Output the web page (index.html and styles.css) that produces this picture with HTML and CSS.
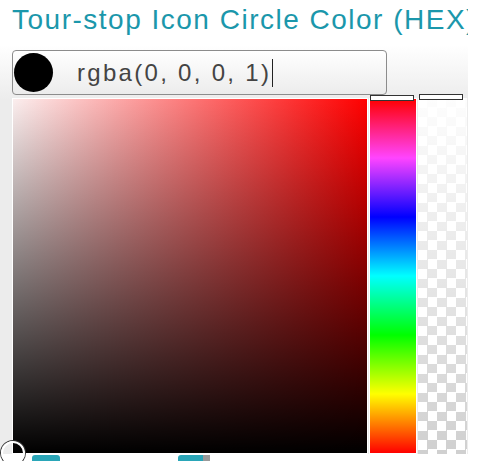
FILE: index.html
```html
<!DOCTYPE html>
<html lang="en">
<head>
    <meta charset="UTF-8">
    <title>Tour-stop Icon Circle Color</title>
    <link rel="stylesheet" href="styles.css">
</head>
<body>

<div class="field">
    <label class="field-label" for="circleColor">Tour-stop Icon Circle Color (HEX)</label>

    <div class="picker">
        <div class="color-input">
            <span class="swatch"></span>
            <span class="color-text" id="circleColor">rgba(0, 0, 0, 1)</span><span class="caret"></span>
        </div>

        <div class="picker-body">
            <div class="saturation">
                <span class="sat-cursor"></span>
            </div>
            <div class="hue">
                <span class="slider-handle"></span>
            </div>
            <div class="alpha">
                <span class="slider-handle"></span>
            </div>
        </div>

        <div class="picker-actions">
            <button class="btn btn-ok" aria-label="OK"></button>
            <button class="btn btn-clear" aria-label="Clear"></button>
            <span class="btn-edge"></span>
        </div>
    </div>
</div>

</body>
</html>
```

FILE: styles.css
```css
/* Color picker field */
body {
    margin: 0;
    background: #fff;
    font-family: 'Liberation Sans', Arial, sans-serif;
}

.field {
    width: 468px;
    overflow: hidden;
}

.field-label {
    display: block;
    padding: 4px 0 0 12px;
    height: 41px;
    font-size: 28px;
    letter-spacing: 1.5px;
    color: #1b97ab;
    white-space: nowrap;
}

.picker {
    position: relative;
    padding: 5px 0 0 0;
    background: linear-gradient(#fff, #ececec 55px, #ececec);
}

.color-input {
    display: flex;
    align-items: center;
    width: 373px;
    height: 43px;
    margin-left: 12px;
    border: 1px solid #8c8c8c;
    border-radius: 4px;
    background: linear-gradient(#fff, #ececec);
}

.swatch {
    width: 39px;
    height: 39px;
    margin-left: 1px;
    border-radius: 50%;
    background: #000;
}

.color-text {
    margin-left: 24px;
    font-size: 24px;
    letter-spacing: 2.3px;
    color: #444;
}

.caret {
    width: 1px;
    height: 28px;
    margin-left: 1px;
    background: #222;
}

.picker-body {
    display: flex;
    margin-top: 3px;
    padding-left: 12px;
}

.saturation {
    position: relative;
    width: 354px;
    height: 354px;
    border: 1px solid #fff;
    background:
        linear-gradient(to top, #000, rgba(0, 0, 0, 0)),
        linear-gradient(to right, #fbeeee, #f00);
}

.sat-cursor {
    position: absolute;
    left: -12px;
    bottom: -12px;
    width: 20px;
    height: 20px;
    border: 2px solid #fff;
    border-radius: 50%;
    box-shadow: 0 0 0 1px #333;
}

.hue {
    position: relative;
    width: 46px;
    height: 354px;
    margin-left: 1px;
    border: 1px solid #fff;
    background: linear-gradient(#f00, #f4f, #00f, #0ff, #0f0, #ff0, #f00);
}

.alpha {
    position: relative;
    width: 49px;
    height: 356px;
    margin-left: 1px;
    background:
        linear-gradient(rgba(255, 255, 255, 0.96), rgba(255, 255, 255, 0)),
        conic-gradient(#d0d0d0 25%, #fff 0 50%, #d0d0d0 0 75%, #fff 0) 0 0 / 19px 19px;
}

.slider-handle {
    position: absolute;
    top: -4px;
    left: 0;
    width: 42px;
    height: 4px;
    border: 1px solid #333;
    background: #fff;
}

.alpha .slider-handle {
    left: 1px;
}

.picker-actions {
    display: flex;
    height: 6px;
    padding: 1px 0 0 32px;
    background: #fff;
}

.btn {
    width: 28px;
    height: 6px;
    padding: 0;
    border: none;
    border-radius: 3px 3px 0 0;
    background: #2aa6b8;
}

.btn-clear {
    width: 25px;
    margin-left: 118px;
    border-radius: 3px 0 0 0;
}

.btn-edge {
    width: 7px;
    height: 6px;
    background: #9a9a9a;
}
```
